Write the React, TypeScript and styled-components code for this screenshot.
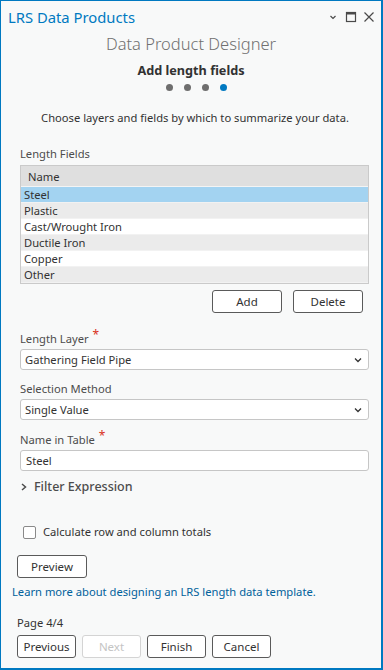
import React from 'react';
import styled, { createGlobalStyle } from 'styled-components';

const GlobalStyle = createGlobalStyle`
  html, body {
    margin: 0;
    padding: 0;
    background: #f8f9f9;
  }
  * {
    box-sizing: border-box;
  }
`;

const Window = styled.div({
  height: "100vh",
  display: "flex",
  flexDirection: "column",
  borderStyle: "solid",
  borderColor: "#0079c1",
  borderWidth: "1px 2px 2px 1px",
  background: "#f8f9f9",
  fontFamily: "'Noto Sans', 'Open Sans', sans-serif",
  fontSize: "11.2px",
  color: "#323232",
});

const TitleBar = styled.div({
  height: "31px",
  display: "flex",
  alignItems: "center",
  justifyContent: "space-between",
  padding: "0 6px 0 7px",
});

const TitleText = styled.div({
  fontSize: "14.8px",
  color: "#0079c1",
});

const WindowControls = styled.div({
  display: "flex",
  alignItems: "center",
  gap: "6px",
  color: "#4a4a4a",
});

const Heading = styled.div({
  textAlign: "center",
  fontSize: "16.5px",
  fontWeight: 300,
  lineHeight: "24px",
  color: "#707070",
});

const StepTitle = styled.div({
  textAlign: "center",
  fontSize: "12.7px",
  fontWeight: 700,
  lineHeight: "18px",
  marginTop: "5px",
  color: "#323232",
});

const Dots = styled.div({
  display: "flex",
  justifyContent: "center",
  gap: "11px",
  marginTop: "5px",
  paddingLeft: "10px",
});

const Dot = styled.span<{ $active?: boolean }>(p => ({
  width: "7px",
  height: "7px",
  borderRadius: "50%",
  background: p.$active ? "#0079c1" : "#6e6e6e",
}));

const Instructions = styled.div({
  textAlign: "center",
  lineHeight: "16px",
  marginTop: "19px",
  paddingLeft: "8px",
});

const Form = styled.div({
  padding: "0 12px 0 19px",
  display: "flex",
  flexDirection: "column",
});

const Label = styled.div<{ $gap?: number }>(p => ({
  lineHeight: "16px",
  marginTop: `${p.$gap ?? 11}px`,
  color: "#4c4c4c",
}));

const Required = styled.span({
  color: "#d83020",
  fontSize: "12px",
  marginLeft: "4px",
  position: "relative",
  top: "-4px",
});

const Table = styled.div({
  marginTop: "3px",
  border: "1px solid #cacaca",
  background: "#ffffff",
});

const HeaderRow = styled.div({
  height: "21px",
  lineHeight: "22px",
  paddingLeft: "7px",
  background: "#dfdfdf",
  borderBottom: "1px solid #f4f4f4",
});

const Row = styled.div<{ $variant: "selected" | "alt" | "plain" }>(p => ({
  height: "16px",
  lineHeight: "15px",
  paddingLeft: "3px",
  borderBottom: "1px solid #f2f2f2",
  background:
    p.$variant === "selected" ? "#a3d3f1" : p.$variant === "alt" ? "#ebebeb" : "#ffffff",
}));

const ButtonRow = styled.div<{ $justify?: string }>(p => ({
  display: "flex",
  justifyContent: p.$justify ?? "flex-start",
  gap: "6px",
}));

const Button = styled.button<{ $width?: number }>(p => ({
  width: `${p.$width ?? 59}px`,
  height: "23px",
  padding: 0,
  border: "1px solid #5a5a5a",
  borderRadius: "3px",
  background: "#ffffff",
  fontFamily: "inherit",
  fontSize: "11.5px",
  color: "#323232",
  "&:disabled": {
    borderColor: "#d4d4d4",
    color: "#c4c4c4",
  },
}));

const TableButtons = styled(ButtonRow)({
  marginTop: "6px",
  gap: "11px",
  paddingRight: "6px",
});

const Select = styled.div({
  marginTop: "2px",
  height: "21px",
  display: "flex",
  alignItems: "center",
  justifyContent: "space-between",
  padding: "0 5px 0 4px",
  border: "1px solid #c6c6c6",
  borderRadius: "3px",
  background: "#ffffff",
  color: "#323232",
});

const TextInput = styled(Select)({
  paddingLeft: "5px",
});

const Expander = styled.div({
  marginTop: "7px",
  display: "flex",
  alignItems: "center",
  gap: "7px",
  fontSize: "12.5px",
  lineHeight: "18px",
  fontWeight: 500,
  color: "#4c4c4c",
  paddingLeft: "1px",
});

const CheckRow = styled.label({
  marginTop: "28px",
  display: "flex",
  alignItems: "center",
  gap: "7px",
  lineHeight: "16px",
  paddingLeft: "3px",
});

const CheckBox = styled.span({
  width: "13px",
  height: "13px",
  border: "1px solid #8a8a8a",
  borderRadius: "2px",
  background: "#ffffff",
});

const Footer = styled.div({
  padding: "0 12px 0 11px",
  display: "flex",
  flexDirection: "column",
});

const Indented = styled.div<{ $gap: number }>(p => ({
  paddingLeft: "5px",
  marginTop: `${p.$gap}px`,
  lineHeight: "16px",
}));

const HelpLink = styled.a({
  marginTop: "6px",
  lineHeight: "16px",
  color: "#00619b",
  textDecoration: "none",
});

const Chevron = ({ size = 10 }: { size?: number }) => (
  <svg width={size} height={size} viewBox="0 0 10 10">
    <path d="M2 3.5 L5 6.5 L8 3.5" fill="none" stroke="#323232" strokeWidth="1.3" />
  </svg>
);

const rows: { name: string; variant: "selected" | "alt" | "plain" }[] = [
  { name: "Steel", variant: "selected" },
  { name: "Plastic", variant: "alt" },
  { name: "Cast/Wrought Iron", variant: "plain" },
  { name: "Ductile Iron", variant: "alt" },
  { name: "Copper", variant: "plain" },
  { name: "Other", variant: "alt" },
];

const App = () => {
  return (
    <Window>
      <GlobalStyle />
      <TitleBar>
        <TitleText>LRS Data Products</TitleText>
        <WindowControls>
          <svg width="12" height="12" viewBox="0 0 12 12">
            <path d="M3.5 5 L6 7.5 L8.5 5" fill="none" stroke="#4a4a4a" strokeWidth="1.2" />
          </svg>
          <svg width="12" height="12" viewBox="0 0 12 12">
            <rect x="1.5" y="1.5" width="9" height="9" fill="none" stroke="#4a4a4a" strokeWidth="1.2" />
            <rect x="1.5" y="1.5" width="9" height="2" fill="#4a4a4a" />
          </svg>
          <svg width="12" height="12" viewBox="0 0 12 12">
            <path d="M1.5 1.5 L10.5 10.5 M10.5 1.5 L1.5 10.5" fill="none" stroke="#4a4a4a" strokeWidth="1.2" />
          </svg>
        </WindowControls>
      </TitleBar>

      <Heading>Data Product Designer</Heading>
      <StepTitle>Add length fields</StepTitle>
      <Dots>
        <Dot />
        <Dot />
        <Dot />
        <Dot $active />
      </Dots>
      <Instructions>Choose layers and fields by which to summarize your data.</Instructions>

      <Form>
        <Label $gap={20}>Length Fields</Label>
        <Table>
          <HeaderRow>Name</HeaderRow>
          {rows.map(r => (
            <Row key={r.name} $variant={r.variant}>{r.name}</Row>
          ))}
        </Table>
        <TableButtons $justify="flex-end">
          <Button $width={70}>Add</Button>
          <Button $width={70}>Delete</Button>
        </TableButtons>

        <Label $gap={18}>Length Layer<Required>*</Required></Label>
        <Select>
          <span>Gathering Field Pipe</span>
          <Chevron />
        </Select>

        <Label>Selection Method</Label>
        <Select>
          <span>Single Value</span>
          <Chevron />
        </Select>

        <Label $gap={12}>Name in Table<Required>*</Required></Label>
        <TextInput>Steel</TextInput>

        <Expander>
          <svg width="6" height="8" viewBox="0 0 6 8">
            <path d="M1 1 L4.5 4 L1 7" fill="none" stroke="#4c4c4c" strokeWidth="1.5" />
          </svg>
          Filter Expression
        </Expander>

        <CheckRow>
          <CheckBox />
          Calculate row and column totals
        </CheckRow>
      </Form>

      <Footer>
        <Indented $gap={15}>
          <Button $width={70}>Preview</Button>
        </Indented>
        <HelpLink href="#">Learn more about designing an LRS length data template.</HelpLink>
        <Indented $gap={15}>Page 4/4</Indented>
        <Indented $gap={4}>
          <ButtonRow>
            <Button>Previous</Button>
            <Button disabled>Next</Button>
            <Button>Finish</Button>
            <Button>Cancel</Button>
          </ButtonRow>
        </Indented>
      </Footer>
    </Window>
  );
};

export default App;
